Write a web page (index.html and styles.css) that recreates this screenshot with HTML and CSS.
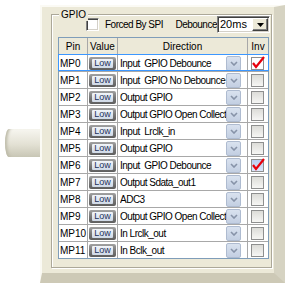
FILE: index.html
```html
<!DOCTYPE html>
<html lang="en">
<head>
  <meta charset="UTF-8">
  <title>GPIO</title>
  <link rel="stylesheet" href="styles.css">
</head>
<body>
  <div class="page">
    <div class="tab"></div>
    <div class="panel">
      <div class="group">
        <span class="legend">GPIO</span>
        <div class="opts">
          <span class="box"></span>
          <span class="forced">Forced By SPI</span>
          <span class="deb">Debounce</span>
          <div class="combo">
            <span class="combo-val">20ms</span>
            <span class="combo-btn"><svg width="7" height="4" viewBox="0 0 7 4"><path d="M0 0h7L3.5 4z" fill="#000"/></svg></span>
          </div>
        </div>

        <div class="grid" id="grid">
          <div class="row head">
            <div class="cell">Pin</div>
            <div class="cell">Value</div>
            <div class="cell">Direction</div>
            <div class="cell">Inv</div>
          </div>
        </div>
      </div>
    </div>
  </div>

  <script>
    const grid = document.getElementById('grid');
    const pins = [
      ['Input  GPIO Debounce', 'checked'],
      ['Input  GPIO No Debounce', ''],
      ['Output GPIO', ''],
      ['Output GPIO Open Collector', ''],
      ['Input  Lrclk_in', ''],
      ['Output GPIO', ''],
      ['Input  GPIO Debounce', 'checked hover'],
      ['Output Sdata_out1', ''],
      ['ADC3', ''],
      ['Output GPIO Open Collector', ''],
      ['In Lrclk_out', ''],
      ['In Bclk_out', '']
    ];
    const chevron = '<svg width="8" height="5" viewBox="0 0 8 5"><path d="M1 1l3 3 3-3" fill="none" stroke="#8793a8" stroke-width="1.6"/></svg>';
    const tick = '<svg class="tick" width="14" height="13" viewBox="0 0 14 13"><path d="M2 7l3 4 8-10" fill="none" stroke="#e8000c" stroke-width="2.2"/></svg>';

    pins.forEach((p, i) => {
      const row = document.createElement('div');
      row.className = 'row' + (i === 0 ? ' sel' : '');
      row.innerHTML =
        `<div class="cell pin">MP${i}</div>` +
        `<div class="cell val"><span class="low"><span>Low</span></span></div>` +
        `<div class="cell dir"><span class="dir-text">${p[0]}</span><span class="drop">${chevron}</span></div>` +
        `<div class="cell inv"><span class="chk ${p[1]}">${p[1] ? tick : ''}</span></div>`;
      grid.appendChild(row);
    });
  </script>
</body>
</html>
```

FILE: styles.css
```css
* {
  box-sizing: border-box;
}
body {
  margin: 0;
  background: #fff;
  font-family: 'Liberation Sans', Arial, sans-serif;
  font-size: 10px;
  color: #000;
}
.page {
  display: flex;
  align-items: flex-start;
  padding-top: 5px;
}
.tab {
  width: 35px;
  height: 28px;
  margin: 124px 0 0 5px;
  border-radius: 4px 0 0 4px / 14px 0 0 14px;
  background: linear-gradient(#f7f6f0, #e3e1d4 55%, #c8c6b5);
  box-shadow: inset 4px 0 3px -2px #bdbba9;
}
.panel {
  width: 245px;
  height: 278px;
  background: #ece9d8;
  border-style: solid;
  border-width: 2px 11px 10px 2px;
  border-color: #fbfaf4 #d6d3c2 #cdc9b6 #fbfaf4;
}
.group {
  position: relative;
  height: 254px;
  margin: 7px 2px 5px 9px;
  padding: 1px 0 0 6px;
  border: 1px solid #aca899;
  box-shadow: inset 1px 1px #fff, 1px 1px #fff;
}
.legend {
  position: absolute;
  top: -6px;
  left: 7px;
  padding: 0 2px;
  line-height: 12px;
  background: #ece9d8;
}
/* top options row */
.opts {
  display: flex;
  align-items: center;
  height: 17px;
  padding-left: 28px;
  margin-right: 1px;
  letter-spacing: -0.5px;
}
.box {
  width: 13px;
  height: 13px;
  background: #fff;
  border: 1px solid;
  border-color: #808080 #fff #fff #808080;
  box-shadow: inset 1px 1px #404040, inset -1px -1px #d4d0c8;
}
.forced {
  margin-left: 6px;
}
.deb {
  margin-left: auto;
}
.combo {
  display: flex;
  width: 53px;
  height: 17px;
  background: #fff;
  border: 1px solid;
  border-color: #808080 #fff #fff #808080;
  box-shadow: inset 1px 1px #404040, inset -1px -1px #d4d0c8;
  padding: 1px;
  letter-spacing: 0;
}
.combo-val {
  flex: 1;
  padding-left: 1px;
  font-size: 11px;
  line-height: 13px;
}
.combo-btn {
  display: flex;
  align-items: center;
  justify-content: center;
  width: 16px;
  height: 13px;
  background: #ece9d8;
  border: 1px solid;
  border-color: #fff #404040 #404040 #fff;
  box-shadow: inset -1px -1px #808080;
}
/* table */
.grid {
  width: 211px;
  margin-top: 4px;
  border: 1px solid #7f9db9;
}
.row {
  display: grid;
  grid-template-columns: 29px 30px 130px 20px;
  height: 17px;
  border-bottom: 1px solid #a8a8a8;
}
.row:last-child {
  height: 16px;
  border-bottom: none;
}
.row.sel {
  position: relative;
}
.row.sel::after {
  content: "";
  position: absolute;
  top: -1px;
  left: -1px;
  right: -1px;
  bottom: 0;
  border: 1px solid #3c97ff;
  pointer-events: none;
}
.cell {
  display: flex;
  align-items: center;
  background: #fff;
  border-right: 1px solid #a8a8a8;
  white-space: pre;
  overflow: hidden;
}
.cell:last-child {
  border-right: none;
}
.head .cell {
  justify-content: center;
  background: #ece9d8;
}
.pin {
  padding-left: 1px;
}
.val {
  justify-content: center;
}
.low {
  display: block;
  width: 27px;
  height: 13px;
  padding: 2px 3px;
  border-radius: 2px;
  background: linear-gradient(#a2a2a2, #7a7a7a 50%, #5e5e5e);
}
.low span {
  display: block;
  height: 9px;
  border-radius: 1px;
  background: linear-gradient(#f2f5f9, #cfd9e7);
  color: #23325a;
  font-size: 9px;
  line-height: 9px;
  text-align: center;
}
.dir {
  padding-left: 2px;
}
.dir-text {
  flex: 1;
  overflow: hidden;
  letter-spacing: -0.5px;
}
.drop {
  display: flex;
  flex-shrink: 0;
  align-items: center;
  justify-content: center;
  width: 15px;
  height: 15px;
  margin-right: 6px;
  border: 1px solid #aebbd0;
  border-radius: 2px;
  background: linear-gradient(#d9e2ef, #c3cfe2);
}
.inv {
  padding-left: 3px;
}
.chk {
  position: relative;
  width: 13px;
  height: 13px;
  border: 1px solid #8e8f8f;
  background: linear-gradient(#dcdcd8, #f6f6f4);
}
.chk.checked {
  background: #fff;
}
.chk.hover {
  background: linear-gradient(#b9cdf3, #dbe6fb);
}
.tick {
  position: absolute;
  top: -2px;
  left: -1px;
}
```
